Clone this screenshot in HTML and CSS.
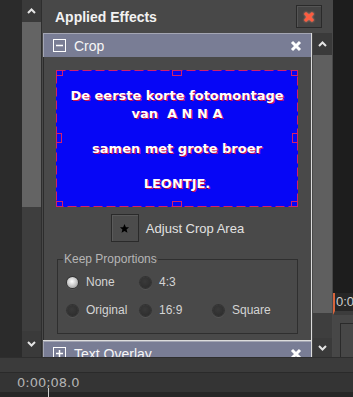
FILE: index.html
```html
<!DOCTYPE html>
<html lang="en">
<head>
    <meta charset="UTF-8">
    <meta name="viewport" content="width=device-width, initial-scale=1.0">
    <title>Applied Effects</title>
    <link rel="stylesheet" href="styles.css">
</head>
<body>
    <div class="workspace">
        <div class="left-pane"></div>

        <div class="scrollbar outer-scroll">
            <div class="scroll-btn up">
                <svg width="9" height="6" viewBox="0 0 9 6"><polyline points="1,5 4.5,1.5 8,5" fill="none" stroke="#e4e4e4" stroke-width="2"/></svg>
            </div>
            <div class="scroll-thumb"></div>
            <div class="scroll-track"></div>
            <div class="scroll-btn down">
                <svg width="9" height="6" viewBox="0 0 9 6"><polyline points="1,1 4.5,4.5 8,1" fill="none" stroke="#e4e4e4" stroke-width="2"/></svg>
            </div>
        </div>

        <div class="splitter"></div>

        <div class="effects-panel">
            <div class="panel-title">
                <h2>Applied Effects</h2>
                <button class="close-btn" title="Close">
                    <svg width="12" height="12" viewBox="0 0 12 12"><path d="M2 2L10 10M10 2L2 10" stroke="#ff5b3f" stroke-width="3"/></svg>
                </button>
            </div>

            <div class="panel-body">
                <div class="effects-list">
                    <div class="effect">
                        <div class="effect-head">
                            <svg class="toggle" width="13" height="13" viewBox="0 0 13 13"><rect x="0.5" y="0.5" width="12" height="12" fill="none" stroke="#fff"/><path d="M3 6.5H10" stroke="#fff" stroke-width="1.5"/></svg>
                            <span>Crop</span>
                            <svg class="remove" width="12" height="12" viewBox="0 0 12 12"><path d="M2 2L10 10M10 2L2 10" stroke="#fff" stroke-width="3"/></svg>
                        </div>
                        <div class="effect-body">
                            <div class="preview">
                                <div>De eerste korte fotomontage</div>
                                <div class="spaced">van  A N N A</div>
                                <div class="blank-before">samen met grote broer</div>
                                <div class="blank-before">LEONTJE.</div>
                                <svg class="crop-frame" width="242" height="137" viewBox="0 0 242 137">
                                    <rect x="0.5" y="0.5" width="241" height="136" fill="none" stroke="#d3206a" stroke-dasharray="9 4"/>
                                    <g fill="none" stroke="#d3206a">
                                        <rect x="0.5" y="0.5" width="6" height="5"/>
                                        <rect x="116.5" y="0.5" width="9" height="5"/>
                                        <rect x="235.5" y="0.5" width="6" height="5"/>
                                        <rect x="0.5" y="63.5" width="5" height="9"/>
                                        <rect x="236.5" y="63.5" width="5" height="9"/>
                                        <rect x="0.5" y="131.5" width="6" height="5"/>
                                        <rect x="116.5" y="131.5" width="9" height="5"/>
                                        <rect x="235.5" y="131.5" width="6" height="5"/>
                                    </g>
                                </svg>
                            </div>

                            <div class="adjust-row">
                                <button class="adjust-btn">
                                    <svg width="11" height="11" viewBox="0 0 24 24"><polygon points="12,2 15,9 22,9.5 16.5,14 18.5,21.5 12,17.5 5.5,21.5 7.5,14 2,9.5 9,9" fill="#000"/></svg>
                                </button>
                                <span>Adjust Crop Area</span>
                            </div>

                            <fieldset class="proportions">
                                <legend>Keep Proportions</legend>
                                <div class="radio-grid">
                                    <label class="option"><span class="radio on"></span>None</label>
                                    <label class="option"><span class="radio"></span>4:3</label>
                                    <span></span>
                                    <label class="option"><span class="radio"></span>Original</label>
                                    <label class="option"><span class="radio"></span>16:9</label>
                                    <label class="option"><span class="radio"></span>Square</label>
                                </div>
                            </fieldset>
                        </div>
                    </div>

                    <div class="effect">
                        <div class="effect-head">
                            <svg class="toggle" width="13" height="13" viewBox="0 0 13 13"><rect x="0.5" y="0.5" width="12" height="12" fill="none" stroke="#fff"/><path d="M3 6.5H10M6.5 3V10" stroke="#fff" stroke-width="1.5"/></svg>
                            <span>Text Overlay</span>
                            <svg class="remove" width="12" height="12" viewBox="0 0 12 12"><path d="M2 2L10 10M10 2L2 10" stroke="#fff" stroke-width="3"/></svg>
                        </div>
                    </div>
                </div>

                <div class="scrollbar inner-scroll">
                    <div class="scroll-btn up">
                        <svg width="9" height="6" viewBox="0 0 9 6"><polyline points="1,5 4.5,1.5 8,5" fill="none" stroke="#e4e4e4" stroke-width="2"/></svg>
                    </div>
                    <div class="scroll-thumb"></div>
                    <div class="scroll-track"></div>
                    <div class="scroll-btn down">
                        <svg width="9" height="6" viewBox="0 0 9 6"><polyline points="1,1 4.5,4.5 8,1" fill="none" stroke="#e4e4e4" stroke-width="2"/></svg>
                    </div>
                </div>
            </div>
        </div>

        <div class="right-pane">
            <div class="monitor"></div>
            <div class="time-tag">0:00</div>
            <div class="mini-panel">
                <div class="mini-box"></div>
            </div>
        </div>
    </div>

    <div class="timeline">
        <div class="ruler"></div>
        <div class="timecode">0:00;08.0</div>
        <div class="track-edge"></div>
        <div class="cursor"></div>
    </div>
</body>
</html>
```

FILE: styles.css
```css
body {
    margin: 0;
    width: 353px;
    height: 397px;
    overflow: hidden;
    background-color: #2b2b2b;
    font-family: "Liberation Sans", Arial, sans-serif;
}

.workspace {
    display: flex;
    height: 357px;
}

.left-pane {
    width: 22px;
    background-color: #2b2b2b;
}

/* scrollbars */
.scrollbar {
    display: flex;
    flex-direction: column;
    width: 19px;
    flex-shrink: 0;
}

.scroll-btn {
    display: flex;
    align-items: center;
    justify-content: center;
    background-color: #3a3a3a;
}

.scroll-thumb {
    background-color: #646464;
}

.scroll-track {
    flex: 1;
    background-color: #3e3e3e;
}

.outer-scroll .up {
    height: 22px;
}

.outer-scroll .scroll-thumb {
    height: 185px;
}

.outer-scroll .down {
    height: 26px;
}

.inner-scroll .up {
    height: 22px;
}

.inner-scroll .scroll-thumb {
    height: 258px;
    background-color: #5f5f5f;
}

.inner-scroll .down {
    height: 19px;
}

.splitter {
    width: 1px;
    background-color: #2e2e2e;
}

/* effects panel */
.effects-panel {
    width: 291px;
    display: flex;
    flex-direction: column;
    background-color: #484848;
}

.panel-title {
    height: 33px;
    display: flex;
    align-items: center;
    justify-content: space-between;
    padding: 0 11px 0 13px;
    box-sizing: border-box;
}

.panel-title h2 {
    margin: 0;
    font-size: 14px;
    font-weight: bold;
    color: #f2f2f2;
}

.close-btn {
    width: 26px;
    height: 23px;
    padding: 0;
    display: flex;
    align-items: center;
    justify-content: center;
    background-color: #444;
    border: 1px solid #2a2a2a;
    box-shadow: inset 1px 1px 0 #555;
}

.close-btn svg {
    filter: drop-shadow(0 0 1px #ff9a7a);
}

.panel-body {
    flex: 1;
    display: flex;
    gap: 1px;
    padding-left: 1px;
    overflow: hidden;
}

.effects-list {
    width: 269px;
    flex-shrink: 0;
}

.effect {
    border-right: 1px solid #dcdcdc;
    border-bottom: 1px solid #dcdcdc;
}

.effect-head {
    height: 23px;
    display: flex;
    align-items: center;
    gap: 8px;
    padding: 0 9px;
    background-color: #797d95;
    border-top: 1px solid #a4a6b4;
    border-left: 1px solid #a4a6b4;
    color: #f6f6f6;
    font-size: 14px;
}

.effect-head .remove {
    margin-left: auto;
}

.effect-body {
    height: 283px;
    padding-top: 13px;
    box-sizing: border-box;
    border-left: 1px solid #2c2c2c;
    background-color: #494949;
}

/* crop preview */
.preview {
    position: relative;
    width: 242px;
    height: 137px;
    margin-left: 12px;
    padding-top: 17px;
    box-sizing: border-box;
    background-color: #0606f6;
    color: #fff;
    text-align: center;
    font-family: "DejaVu Sans", sans-serif;
    font-weight: bold;
    font-size: 13px;
    line-height: 17.5px;
    text-shadow: 1px 1px 0 #c8124c;
}

.preview .spaced {
    white-space: pre;
}

.preview .blank-before {
    margin-top: 17.5px;
}

.crop-frame {
    position: absolute;
    top: 0;
    left: 0;
}

.adjust-row {
    margin-top: 7px;
    display: flex;
    align-items: center;
    justify-content: center;
    gap: 7px;
    color: #e2e2e2;
    font-size: 13px;
}

.adjust-btn {
    width: 28px;
    height: 28px;
    padding: 0;
    display: flex;
    align-items: center;
    justify-content: center;
    background-color: #4c4c4c;
    border: 1px solid #2a2a2a;
    box-shadow: inset 1px 1px 0 #5a5a5a;
}

/* keep proportions group */
.proportions {
    width: 241px;
    box-sizing: border-box;
    margin: 10px 0 0 13px;
    padding: 0 0 14px 5px;
    border: 1px solid #2f2f2f;
    font-size: 12px;
}

.proportions legend {
    padding: 0 1px;
    line-height: 14px;
    color: #b6b6b6;
}

.radio-grid {
    display: grid;
    grid-template-columns: repeat(3, 73px);
    row-gap: 10px;
    margin: 7px 0 0 4px;
}

.option {
    height: 18px;
    display: flex;
    align-items: center;
    gap: 8px;
    color: #d4d4d4;
}

.radio {
    width: 11px;
    height: 11px;
    border-radius: 50%;
    background: radial-gradient(circle at 45% 40%, #3a3a3a, #2a2a2a);
    box-shadow: 0 0 0 1px #333, 0 1px 0 1px #555;
}

.radio.on {
    background: radial-gradient(circle at 45% 40%, #ffffff, #d4d4d4 40%, #8a8a8a);
}

/* right side */
.right-pane {
    width: 20px;
    display: flex;
    flex-direction: column;
    background-color: #1d1d1d;
    overflow: hidden;
}

.monitor {
    height: 293px;
}

.time-tag {
    height: 18px;
    line-height: 18px;
    padding-left: 1px;
    border-left: 2px solid #d8643c;
    border-bottom: 4px solid #3c3c3c;
    background-color: #262626;
    color: #cfcfcf;
    font-size: 13px;
    white-space: nowrap;
}

.mini-panel {
    flex: 1;
    padding: 8px 0 0 7px;
    background-color: #474747;
}

.mini-box {
    height: 100%;
    border: 1px solid #2a2a2a;
    border-right: none;
}

/* timeline */
.timeline {
    position: relative;
    height: 40px;
}

.ruler {
    height: 15px;
    box-sizing: border-box;
    border-top: 1px solid #2e2e2e;
    background-color: #3b3b3b;
}

.timecode {
    height: 19px;
    line-height: 19px;
    padding-left: 17px;
    border-top: 1px solid #2a2a2a;
    background-color: #343434;
    color: #b3b3b3;
    font-family: "DejaVu Sans", sans-serif;
    font-size: 13px;
}

.track-edge {
    height: 5px;
    background-color: #262626;
}

.cursor {
    position: absolute;
    left: 48px;
    top: 31px;
    width: 1px;
    height: 9px;
    background-color: #cfcfcf;
}
```
